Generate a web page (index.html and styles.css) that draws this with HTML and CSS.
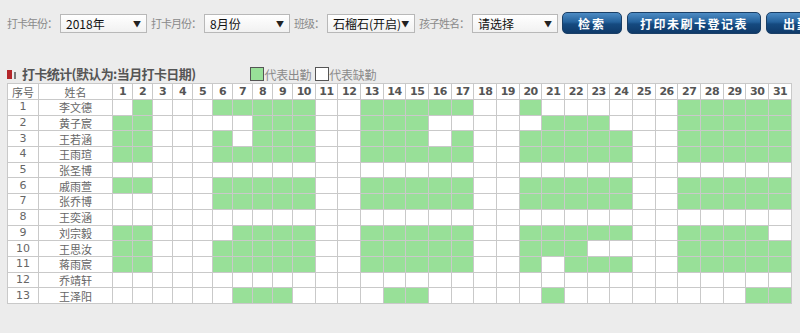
FILE: index.html
```html
<!DOCTYPE html>
<html lang="zh-CN">
<head>
<meta charset="utf-8">
<title>打卡统计</title>
<link rel="stylesheet" href="styles.css">
</head>
<body>
<div class="toolbar">
  <span class="lbl">打卡年份：</span>
  <div class="sel sel-year"><span>2018年</span><span class="arrow">▼</span></div>
  <span class="lbl">打卡月份：</span>
  <div class="sel sel-month"><span>8月份</span><span class="arrow">▼</span></div>
  <span class="lbl">班级：</span>
  <div class="sel sel-class"><span>石榴石(开启)</span><span class="arrow">▼</span></div>
  <span class="lbl">孩子姓名：</span>
  <div class="sel sel-child"><span>请选择</span><span class="arrow">▼</span></div>
  <button class="btn btn-search">检索</button>
  <button class="btn btn-print">打印未刷卡登记表</button>
  <button class="btn btn-out">出勤统计导出</button>
</div>

<div class="section-head">
  <span class="icon-red"></span><span class="icon-gray"></span>
  <h2 class="title">打卡统计(默认为:当月打卡日期)</h2>
  <div class="legend">
    <span class="box box-on"></span><span class="legend-text">代表出勤</span>
    <span class="box box-off"></span><span class="legend-text">代表缺勤</span>
  </div>
</div>

<table class="grid">
  <colgroup>
    <col class="c-no"><col class="c-name">
    <col class="c-d"><col class="c-d"><col class="c-d"><col class="c-d"><col class="c-d"><col class="c-d"><col class="c-d"><col class="c-d"><col class="c-d">
    <col><col><col><col><col><col><col><col><col><col><col><col><col><col><col><col><col><col><col><col><col><col>
  </colgroup>
  <thead>
    <tr><th>序号</th><th>姓名</th><th class="n">1</th><th class="n">2</th><th class="n">3</th><th class="n">4</th><th class="n">5</th><th class="n">6</th><th class="n">7</th><th class="n">8</th><th class="n">9</th><th class="n">10</th><th class="n">11</th><th class="n">12</th><th class="n">13</th><th class="n">14</th><th class="n">15</th><th class="n">16</th><th class="n">17</th><th class="n">18</th><th class="n">19</th><th class="n">20</th><th class="n">21</th><th class="n">22</th><th class="n">23</th><th class="n">24</th><th class="n">25</th><th class="n">26</th><th class="n">27</th><th class="n">28</th><th class="n">29</th><th class="n">30</th><th class="n">31</th></tr>
  </thead>
  <tbody>
    <tr><td class="no">1</td><td class="name">李文德</td><td></td><td class="p"></td><td></td><td></td><td></td><td class="p"></td><td class="p"></td><td class="p"></td><td class="p"></td><td class="p"></td><td></td><td></td><td class="p"></td><td class="p"></td><td class="p"></td><td class="p"></td><td class="p"></td><td></td><td></td><td class="p"></td><td></td><td></td><td></td><td></td><td></td><td></td><td class="p"></td><td class="p"></td><td class="p"></td><td class="p"></td><td class="p"></td></tr>
    <tr><td class="no">2</td><td class="name">黄子宸</td><td class="p"></td><td class="p"></td><td></td><td></td><td></td><td></td><td></td><td class="p"></td><td class="p"></td><td class="p"></td><td></td><td></td><td class="p"></td><td class="p"></td><td class="p"></td><td></td><td></td><td></td><td></td><td></td><td class="p"></td><td class="p"></td><td class="p"></td><td></td><td></td><td></td><td class="p"></td><td class="p"></td><td class="p"></td><td class="p"></td><td class="p"></td></tr>
    <tr><td class="no">3</td><td class="name">王若涵</td><td class="p"></td><td class="p"></td><td></td><td></td><td></td><td class="p"></td><td></td><td class="p"></td><td class="p"></td><td class="p"></td><td></td><td></td><td class="p"></td><td class="p"></td><td class="p"></td><td></td><td class="p"></td><td></td><td></td><td class="p"></td><td class="p"></td><td class="p"></td><td class="p"></td><td class="p"></td><td></td><td></td><td class="p"></td><td class="p"></td><td class="p"></td><td class="p"></td><td class="p"></td></tr>
    <tr><td class="no">4</td><td class="name">王雨瑄</td><td class="p"></td><td class="p"></td><td></td><td></td><td></td><td class="p"></td><td class="p"></td><td class="p"></td><td class="p"></td><td class="p"></td><td></td><td></td><td class="p"></td><td class="p"></td><td class="p"></td><td class="p"></td><td class="p"></td><td></td><td></td><td class="p"></td><td class="p"></td><td class="p"></td><td class="p"></td><td class="p"></td><td></td><td></td><td class="p"></td><td class="p"></td><td class="p"></td><td class="p"></td><td class="p"></td></tr>
    <tr><td class="no">5</td><td class="name">张圣博</td><td></td><td></td><td></td><td></td><td></td><td></td><td></td><td></td><td></td><td></td><td></td><td></td><td></td><td></td><td></td><td></td><td></td><td></td><td></td><td></td><td></td><td></td><td></td><td></td><td></td><td></td><td></td><td></td><td></td><td></td><td></td></tr>
    <tr><td class="no">6</td><td class="name">戚雨萱</td><td class="p"></td><td class="p"></td><td></td><td></td><td></td><td class="p"></td><td class="p"></td><td class="p"></td><td class="p"></td><td class="p"></td><td></td><td></td><td class="p"></td><td class="p"></td><td class="p"></td><td class="p"></td><td class="p"></td><td></td><td></td><td class="p"></td><td class="p"></td><td class="p"></td><td class="p"></td><td class="p"></td><td></td><td></td><td class="p"></td><td class="p"></td><td class="p"></td><td class="p"></td><td class="p"></td></tr>
    <tr><td class="no">7</td><td class="name">张乔博</td><td></td><td></td><td></td><td></td><td></td><td class="p"></td><td class="p"></td><td class="p"></td><td class="p"></td><td class="p"></td><td></td><td></td><td class="p"></td><td class="p"></td><td class="p"></td><td class="p"></td><td class="p"></td><td></td><td></td><td class="p"></td><td class="p"></td><td class="p"></td><td class="p"></td><td class="p"></td><td></td><td></td><td class="p"></td><td class="p"></td><td class="p"></td><td class="p"></td><td class="p"></td></tr>
    <tr><td class="no">8</td><td class="name">王奕涵</td><td></td><td></td><td></td><td></td><td></td><td></td><td></td><td></td><td></td><td></td><td></td><td></td><td></td><td></td><td></td><td></td><td></td><td></td><td></td><td></td><td></td><td></td><td></td><td></td><td></td><td></td><td></td><td></td><td></td><td></td><td></td></tr>
    <tr><td class="no">9</td><td class="name">刘宗毅</td><td class="p"></td><td class="p"></td><td></td><td></td><td></td><td></td><td class="p"></td><td class="p"></td><td class="p"></td><td class="p"></td><td></td><td></td><td class="p"></td><td class="p"></td><td class="p"></td><td class="p"></td><td class="p"></td><td></td><td></td><td class="p"></td><td class="p"></td><td class="p"></td><td class="p"></td><td class="p"></td><td></td><td></td><td class="p"></td><td class="p"></td><td class="p"></td><td class="p"></td><td></td></tr>
    <tr><td class="no">10</td><td class="name">王思汝</td><td class="p"></td><td class="p"></td><td></td><td></td><td></td><td class="p"></td><td class="p"></td><td class="p"></td><td class="p"></td><td class="p"></td><td></td><td></td><td class="p"></td><td class="p"></td><td class="p"></td><td class="p"></td><td class="p"></td><td></td><td></td><td class="p"></td><td class="p"></td><td class="p"></td><td></td><td></td><td></td><td></td><td class="p"></td><td class="p"></td><td class="p"></td><td class="p"></td><td class="p"></td></tr>
    <tr><td class="no">11</td><td class="name">蒋雨宸</td><td class="p"></td><td class="p"></td><td></td><td></td><td></td><td class="p"></td><td class="p"></td><td class="p"></td><td class="p"></td><td class="p"></td><td></td><td></td><td class="p"></td><td class="p"></td><td class="p"></td><td class="p"></td><td class="p"></td><td></td><td></td><td class="p"></td><td></td><td class="p"></td><td class="p"></td><td class="p"></td><td></td><td></td><td class="p"></td><td class="p"></td><td class="p"></td><td class="p"></td><td class="p"></td></tr>
    <tr><td class="no">12</td><td class="name">乔靖轩</td><td></td><td></td><td></td><td></td><td></td><td></td><td></td><td></td><td></td><td></td><td></td><td></td><td></td><td></td><td></td><td></td><td></td><td></td><td></td><td></td><td></td><td></td><td></td><td></td><td></td><td></td><td></td><td></td><td></td><td></td><td></td></tr>
    <tr><td class="no">13</td><td class="name">王泽阳</td><td></td><td></td><td></td><td></td><td></td><td></td><td class="p"></td><td class="p"></td><td class="p"></td><td></td><td></td><td></td><td></td><td class="p"></td><td class="p"></td><td></td><td></td><td></td><td></td><td></td><td class="p"></td><td></td><td></td><td></td><td></td><td></td><td></td><td></td><td></td><td class="p"></td><td class="p"></td></tr>
  </tbody>
</table>
</body>
</html>
```

FILE: styles.css
```css
html, body {
  margin: 0;
  padding: 0;
}
body {
  width: 800px;
  height: 333px;
  overflow: hidden;
  background: #ececec;
  font-family: "Noto Sans CJK SC", "DejaVu Sans", sans-serif;
  color: #555;
}

/* toolbar */
.toolbar {
  display: flex;
  align-items: center;
  height: 22px;
  padding: 12px 0 0 7px;
  white-space: nowrap;
  overflow: hidden;
}
.lbl {
  font-size: 11px;
  letter-spacing: -1px;
  color: #8a8a8a;
  margin-right: 3px;
  flex-shrink: 0;
}
.sel {
  flex-shrink: 0;
  box-sizing: border-box;
  height: 19px;
  border: 1px solid #b8b8b8;
  background: linear-gradient(#ffffff, #f1f1f1);
  display: flex;
  align-items: center;
  justify-content: space-between;
  padding: 0 5px 0 5px;
  font-size: 12px;
  color: #111;
  margin-right: 4px;
}
.sel-year { width: 87px; }
.sel-month { width: 86px; }
.sel-class { width: 88px; }
.sel-child { width: 86px; }
.arrow {
  font-size: 8px;
  color: #222;
}
.btn {
  flex-shrink: 0;
  height: 22px;
  box-sizing: border-box;
  border: 1px solid #1a3f66;
  border-radius: 5px;
  background: linear-gradient(#4d8cc4 0%, #24619b 45%, #154a80 55%, #0f3a69 100%);
  color: #fff;
  font-family: "Noto Sans CJK SC", sans-serif;
  font-weight: bold;
  font-size: 12px;
  letter-spacing: 2px;
  padding: 0;
  margin-right: 5px;
}
.btn-search { width: 60px; }
.btn-print { width: 134px; letter-spacing: 1.5px; }
.btn-out { width: 90px; text-align: left; padding-left: 16px; }

/* section header */
.section-head {
  display: flex;
  align-items: center;
  height: 20px;
  margin-top: 29px;
  padding-left: 7px;
}
.icon-red {
  width: 5px;
  height: 9px;
  background: #b3262a;
  margin-top: 3px;
}
.icon-gray {
  width: 2px;
  height: 7px;
  background: #7a7a7a;
  margin: 4px 0 0 2px;
}
.title {
  margin: 0 0 0 6px;
  font-size: 13px;
  font-weight: bold;
  color: #555;
  letter-spacing: -0.6px;
}
.legend {
  display: flex;
  align-items: center;
  margin-left: 55px;
  margin-top: 2px;
}
.box {
  width: 12px;
  height: 12px;
  border: 1px solid #555;
}
.box-on { background: #98e098; }
.box-off { background: #fff; margin-left: 4px; }
.legend-text {
  font-size: 12px;
  color: #8a8a8a;
  letter-spacing: -0.3px;
}

/* grid */
.grid {
  margin-left: 7px;
  width: 785px;
  table-layout: fixed;
  border-collapse: collapse;
  background: #fff;
}
.c-no { width: 31px; }
.c-name { width: 74px; }
.c-d { width: 20px; }
.grid th,
.grid td {
  border: 1px solid #c9c9c9;
  padding: 0;
  text-align: center;
  vertical-align: middle;
  line-height: 14px;
}
.grid thead tr { height: 16px; }
.grid tbody tr { height: 15.7px; }
.grid th {
  font-size: 11px;
  font-weight: normal;
  color: #666;
  background: #fff;
}
.grid th.n {
  font-family: "DejaVu Sans", sans-serif;
  font-weight: bold;
  font-size: 11px;
  letter-spacing: -0.5px;
  color: #555;
}
.grid td.no {
  font-family: "DejaVu Sans", sans-serif;
  font-size: 11px;
  color: #666;
}
.grid td.name {
  font-size: 11px;
  color: #666;
}
.grid td.p {
  background: #98e098;
}
```
